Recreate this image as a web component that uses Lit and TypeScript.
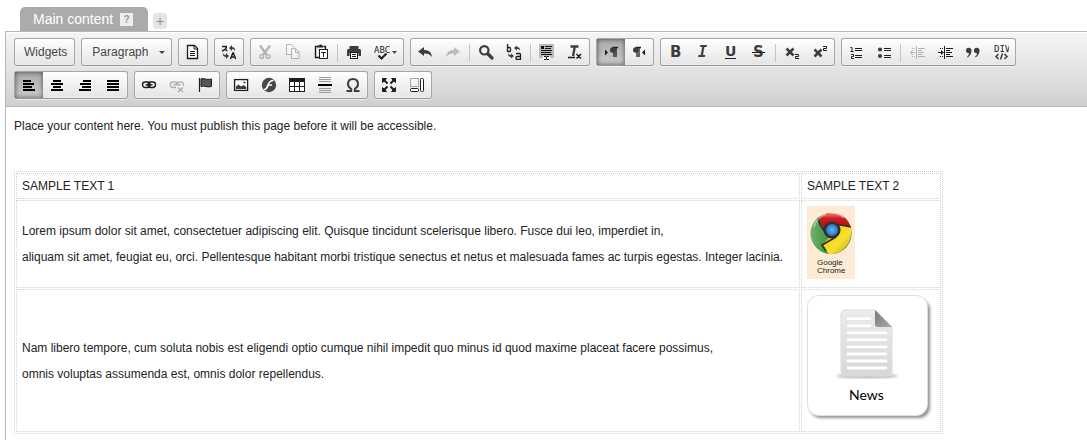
import { LitElement, html, svg, css, nothing, TemplateResult, SVGTemplateResult } from "lit";
import { customElement, property } from "lit/decorators.js";

const bars = (color: string, rects: number[][]) =>
  rects.map(([x, y, w, h]) => svg`<rect x=${x} y=${y} width=${w} height=${h} fill=${color} shape-rendering="crispEdges"/>`);

const K = "#1d1d1d";
const G = "#3d3d3d";

const ICONS: Record<string, SVGTemplateResult> = {
  page: svg`<path d="M2.5 1.5h7l3 3v10h-10z" fill="#fff" stroke=${K} stroke-width="1.3"/><path d="M9 1.5V5h3.5" fill="none" stroke=${K}/>${bars(K, [[5, 7, 5, 1], [5, 9, 5, 1], [5, 11, 5, 1]])}`,
  language: svg`<path d="M1 2.5h5M5.5 3C5 5 3 6.5 1 7M3.8 4.8L6.3 7" fill="none" stroke=${K} stroke-width="1.3"/>
    <path d="M8 4l3-3v2c2 0 3 1 3 4-1-1.5-2-2-3-2v2z" fill=${G}/>
    <path d="M8 12l-3 3v-2c-2 0-3-1-3.5-4 1 1.5 2 2 3.5 2V9z" fill=${G}/>
    <path d="M9.5 15l2.3-6h.6l2.3 6M10.5 13h3.3" fill="none" stroke=${K} stroke-width="1.4"/>`,
  cut: svg`<g fill="none" stroke=${K}><path d="M3 1.5l7 9.500M13 1.5L6 11" stroke-width="2.2"/><circle cx="4.8" cy="12.5" r="1.9" stroke-width="1.3"/><circle cx="11.2" cy="12.5" r="1.9" stroke-width="1.3"/></g>`,
  copy: svg`<g fill="#fff" stroke=${K}><path d="M1.5 0.5h5l3 3v7h-8z"/><path d="M6.5 4.5h4l3.500 3.500v6.500H6.5z"/><path d="M10.5 5v3.500H14" fill="none"/></g>`,
  paste: svg`<path d="M5 2.5H2.5v11H6" fill="none" stroke=${K} stroke-width="1.4"/><path d="M11 2.5h1.500V5" fill="none" stroke=${K} stroke-width="1.4"/><path d="M4.5 3.5v-2h2V.5h2v1h2v2z" fill=${K}/><rect x="6.5" y="5.5" width="8" height="9" fill="#fff" stroke=${K}/>${bars(K, [[8, 8, 5, 1], [10, 8, 1, 5]])}`,
  print: svg`<path d="M3.5 2h9v3h-9z" fill=${G}/><path d="M2 5h12l1 1v6h-2.500V9h-9v3H1V6z" fill=${G}/><rect x="4.500" y="8.500" width="7" height="6" fill="#fff" stroke=${K}/>${bars(K, [[6, 10, 4, 1], [6, 12, 4, 1]])}`,
  spell: svg`<text x="0" y="9" font-family="DejaVu Sans Mono, monospace" font-size="9" fill=${K}>ABC</text><path d="M4.500 11.500L7.500 14.500 12.500 9.500" fill="none" stroke=${K} stroke-width="2"/>`,
  undo: svg`<path d="M1 7.500L7 3v3c5 0 7.500 2.500 8 7-2-2.500-4-3.500-8-3.500V12z" fill=${G}/>`,
  redo: svg`<path d="M15 7.500L9 3v3c-5 0-7.500 2.500-8 7 2-2.500 4-3.500 8-3.500V12z" fill="#444"/>`,
  find: svg`<circle cx="6.300" cy="6.300" r="4.200" fill="#f4f4f4" stroke=${G} stroke-width="2.200"/><path d="M10 10l4 4" stroke=${G} stroke-width="3.200" stroke-linecap="round"/>`,
  replace: svg`<path d="M1.500 0v8M1.500 3.500h2q1 0 1 1v2q0 1-1 1h-2" fill="none" stroke=${K} stroke-width="1.300"/>
    <path d="M8 4l3-2.500V3c2 0 3 1 3 3.500C13 5.300 12 5 11 5v1.500z" fill=${G}/><path d="M8 12l-3 2.500V13c-2 0-3-1-3-3.500C3 10.700 4 11 5 11V9.500z" fill=${G}/>
    <path d="M10 9.500h3.500q1 0 1 1v5M14.500 12.500H11q-1 0-1 1v1q0 1 1 1h4" fill="none" stroke=${K} stroke-width="1.300"/>`,
  select: svg`${bars("#bbb", [[0, 0, 15, 14]])}${bars("#111", [[2, 2, 3, 3], [6, 2, 7, 1], [6, 4, 6, 1], [2, 6, 11, 1], [2, 8, 10, 1], [2, 10, 11, 1]])}${bars("#fff", [[4, 12, 7, 4]])}<path d="M5 12.500h2M8 12.500h2M5 15.500h2M8 15.500h2M7.500 12.500v3" stroke="#111"/>`,
  unformat: svg`<path d="M3.500 2.500h8M7.700 3l-1.600 9" stroke=${G} stroke-width="2.300"/><path d="M1 13.500h7M9.500 10l4.500 4.500M14 10l-4.500 4.500" stroke=${K} stroke-width="1.500"/>`,
  ltr: svg`<path d="M2 5.500v6l3-3z" fill=${K}/><path d="M11 3v10M13 3v10M9.500 3.500H15" stroke=${K} stroke-width="1.300"/><circle cx="9.800" cy="6" r="2.800" fill=${G}/>`,
  rtl: svg`<path d="M14 5.500v6l-3-3z" fill=${K}/><path d="M6 3v10M8 3v10M4.500 3.500H10" stroke=${K} stroke-width="1.300"/><circle cx="4.800" cy="6" r="2.800" fill=${G}/>`,
  bold: svg`<text x="3" y="13" font-family="DejaVu Sans, sans-serif" font-weight="700" font-size="15" fill=${G}>B</text>`,
  italic: svg`<text x="3" y="13" font-family="DejaVu Sans Mono, monospace" font-style="italic" font-weight="700" font-size="15" fill=${G}>I</text>`,
  underline: svg`<text x="2" y="12" font-family="DejaVu Sans, sans-serif" font-weight="700" font-size="14" fill=${G}>U</text>${bars(K, [[2, 14, 11, 1]])}`,
  strike: svg`<text x="2" y="13" font-family="DejaVu Sans, sans-serif" font-weight="700" font-size="15" fill=${G}>S</text>${bars(K, [[1, 8, 13, 1]])}`,
  sub: svg`<path d="M2.500 4.500l7 7M9.500 4.500l-7 7" stroke=${G} stroke-width="2.500"/><path d="M11 10.500h3.500v2h-3v2H15" fill="none" stroke=${K}/>`,
  sup: svg`<path d="M2.500 5.500l7 7M9.500 5.500l-7 7" stroke=${G} stroke-width="2.500"/><path d="M11 2.500h3.500v2h-3v2H15" fill="none" stroke=${K}/>`,
  numbers: svg`<path d="M2.500 3.500H4V7M2.500 7.500h3M3 10.500h2.500v2h-2v2H6" fill="none" stroke=${K}/>${bars(K, [[7, 4, 7, 1], [7, 6, 7, 1], [7, 11, 7, 1], [7, 13, 7, 1]])}`,
  bullets: svg`<circle cx="4" cy="5.500" r="2.100" fill=${G}/><circle cx="4" cy="12" r="2.100" fill=${G}/>${bars(K, [[8, 4, 7, 1], [8, 6, 7, 1], [8, 11, 7, 1], [8, 13, 7, 1]])}`,
  outdent: svg`${bars(K, [[7, 2, 1, 13], [9, 4, 7, 1], [9, 6, 4, 1], [9, 8, 6, 1], [9, 10, 4, 1], [9, 12, 7, 1], [3, 4, 1, 1], [5, 4, 1, 1], [3, 12, 1, 1], [5, 12, 1, 1]])}<path d="M6 8.500H2M4 6L1.500 8.500 4 11" fill="none" stroke=${K}/>`,
  indent: svg`${bars(K, [[7, 2, 1, 13], [9, 4, 7, 1], [9, 6, 4, 1], [9, 8, 6, 1], [9, 10, 4, 1], [9, 12, 7, 1], [3, 4, 1, 1], [5, 4, 1, 1], [3, 12, 1, 1], [5, 12, 1, 1]])}<path d="M1 8.500h4" stroke=${K}/><path d="M4 6l3 2.500L4 11z" fill=${K}/>`,
  quote: svg`<g fill=${G}><path d="M1 6.500a2.700 2.700 0 1 1 5.500 0c0 3-1.500 5.500-4 7L2 12.800c1.300-1 2-2 2-3.500C2.300 9.500 1 8.300 1 6.500z"/><path d="M9 6.500a2.700 2.700 0 1 1 5.500 0c0 3-1.500 5.500-4 7l-.5-.7c1.300-1 2-2 2-3.500-1.700.2-3-1-3-2.800z"/></g>`,
  div: svg`<text x="1" y="8" font-family="DejaVu Sans Mono, monospace" font-size="9" fill=${K}>DIV</text><path d="M5.500 10L3 12.500 5.500 15M11.500 10l2.500 2.500-2.500 2.500M9.500 9.500l-2 6" fill="none" stroke=${G} stroke-width="1.500"/>`,
  left: svg`${bars("#000", [[2, 3, 8, 2], [2, 6, 11, 2], [2, 9, 9, 2], [2, 12, 12, 2]])}`,
  center: svg`${bars("#000", [[4, 3, 8, 2], [2, 6, 12, 2], [4, 9, 8, 2], [2, 12, 12, 2]])}`,
  right: svg`${bars("#000", [[6, 3, 8, 2], [3, 6, 11, 2], [5, 9, 9, 2], [2, 12, 12, 2]])}`,
  justify: svg`${bars("#000", [[2, 3, 12, 2], [2, 6, 12, 2], [2, 9, 12, 2], [2, 12, 12, 2]])}`,
  link: svg`<g fill="none" stroke=${K} stroke-width="1.400"><rect x="1.500" y="5" width="7.500" height="5.500" rx="2.700"/><rect x="7" y="5" width="7.500" height="5.500" rx="2.700"/><path d="M4.500 7.800h7"/></g>`,
  unlink: svg`<g fill="none" stroke=${K} stroke-width="1.400"><path d="M7 10.500H4a2.700 2.700 0 0 1 0-5.500h2.500a2.700 2.700 0 0 1 2.500 2M7 7a2.700 2.700 0 0 1 2.500-2h2.500a2.700 2.700 0 0 1 2.200 4M4.500 7.800h7M9 10.500l5 4.500M14 10.500L9 15"/></g>`,
  flag: svg`<path d="M2.500 1v14" stroke=${K} stroke-width="1.200"/><path d="M4 2c3-1.500 5 1.500 10.500 0v7.500C10 11 8 8 4 9.500z" fill="#555" stroke=${K}/>`,
  image: svg`<rect x="1.600" y="2.600" width="13" height="10.800" fill="#fff" stroke=${K} stroke-width="1.300"/><path d="M3 12V9.500l2.500-2L8 9.500 10.500 8l2.800 2V12z" fill=${G}/><circle cx="11.500" cy="5.500" r="1.100" fill=${G}/>`,
  flash: svg`<circle cx="8" cy="8" r="7.200" fill="#484848"/><path d="M12.500 3.500C8.500 3.500 7.500 6 6.800 8.500 6.200 11 5.500 12.300 3 12.800M7.500 8h3.500" fill="none" stroke="#fff" stroke-width="1.600"/>`,
  table: svg`<rect x="0.500" y="1.500" width="15" height="13" fill="#fff" stroke=${K}/>${bars(K, [[0, 1, 16, 4], [5, 5, 1, 10], [10, 5, 1, 10], [0, 9, 16, 1]])}`,
  rule: svg`${bars("#999", [[2, 0, 12, 1], [2, 2, 12, 1], [2, 4, 12, 1], [2, 11, 12, 1], [2, 13, 12, 1], [2, 15, 12, 1]])}${bars("#000", [[1, 7, 14, 2]])}`,
  omega: svg`<path d="M1.500 14h4.700v-2C3.800 10.500 3 9 3 7c0-3 2-5 5-5s5 2 5 5c0 2-.8 3.500-3.200 5v2h4.700" fill="none" stroke=${G} stroke-width="2"/>`,
  maximize: svg`<g fill=${K} stroke=${K}><path d="M1.500 1.500h4l-4 4zM14.500 1.500h-4l4 4zM1.500 14.500h4l-4-4zM14.500 14.500h-4l4-4z"/><path d="M3 3l3.500 3.500M13 3L9.500 6.500M3 13l3.500-3.500M13 13L9.500 9.500" stroke-width="2"/></g>`,
  blocks: svg`<rect x="1.500" y="1.500" width="8" height="8" fill="none" stroke="#555" stroke-dasharray="1 1"/><rect x="1.500" y="11.500" width="8" height="3" rx="1" fill="#fff" stroke=${K}/><rect x="11.500" y="1.500" width="3" height="13" rx="1" fill="#fff" stroke=${K}/>`,
};

@customElement("tool-group")
class ToolGroup extends LitElement {
  static styles = css`
    :host {
      display: flex;
      box-sizing: border-box;
      height: 28px;
      border: 1px solid #a6a6a6;
      border-bottom-color: #979797;
      border-radius: 3px;
      background: linear-gradient(#fff, #e4e4e4);
      box-shadow: 0 1px 0 rgba(255, 255, 255, 0.5), inset 0 0 2px #fff;
    }
  `;
  render() {
    return html`<slot></slot>`;
  }
}

@customElement("tool-button")
class ToolButton extends LitElement {
  @property() icon = "";
  @property() label = "";
  @property({ type: Boolean }) on = false;
  @property({ type: Boolean }) off = false;
  @property({ type: Boolean }) menu = false;

  static styles = css`
    :host {
      display: flex;
    }
    .btn {
      display: flex;
      align-items: center;
      margin: 0;
      padding: 0 6px;
      border: 0;
      background: none;
      cursor: pointer;
    }
    .on {
      background: linear-gradient(#aaa, #cacaca);
      box-shadow: inset 0 0 5px rgba(0, 0, 0, 0.6);
    }
    .icon {
      display: block;
      width: 16px;
      height: 16px;
    }
    .btn:disabled .icon {
      opacity: 0.3;
    }
    .arrow {
      width: 5px;
      height: 3px;
      margin: 0 0 0 2px;
      fill: #474747;
    }
  `;
  render() {
    return html`<button
      class="btn ${this.on ? "on" : ""}"
      aria-label=${this.label}
      title=${this.label}
      ?disabled=${this.off}
    >
      <svg class="icon" viewBox="0 0 16 16" aria-hidden="true">${ICONS[this.icon]}</svg>
      ${this.menu ? html`<svg class="arrow" viewBox="0 0 5 3"><path d="M0 0h5L2.500 3z" /></svg>` : nothing}
    </button>`;
  }
}

type Tool = [icon: string, label: string, state?: "on" | "off" | "menu"] | "|";

const TOP: Tool[][] = [
  [["page", "Templates"]],
  [["language", "Translate"]],
  [["cut", "Cut", "off"], ["copy", "Copy", "off"], ["paste", "Paste as plain text"], "|", ["print", "Print"], ["spell", "Spell check", "menu"]],
  [["undo", "Undo"], ["redo", "Redo", "off"], "|", ["find", "Find"], ["replace", "Replace"], "|", ["select", "Select all"], ["unformat", "Remove format"]],
  [["ltr", "Left to right", "on"], ["rtl", "Right to left"]],
  [["bold", "Bold"], ["italic", "Italic"], ["underline", "Underline"], ["strike", "Strikethrough"], "|", ["sub", "Subscript"], ["sup", "Superscript"]],
  [["numbers", "Numbered list"], ["bullets", "Bulleted list"], "|", ["outdent", "Decrease indent", "off"], ["indent", "Increase indent"], ["quote", "Block quote"], ["div", "Div container"]],
];

const BOTTOM: Tool[][] = [
  [["left", "Align left", "on"], ["center", "Center"], ["right", "Align right"], ["justify", "Justify"]],
  [["link", "Link"], ["unlink", "Unlink", "off"], ["flag", "Anchor"]],
  [["image", "Image"], ["flash", "Flash"], ["table", "Table"], ["rule", "Horizontal line"], ["omega", "Special character"]],
  [["maximize", "Maximize"], ["blocks", "Show blocks"]],
];

@customElement("app-root")
class AppRoot extends LitElement {
  static styles = css`
    :host {
      display: block;
      padding: 7px 0 0 5px;
      background: #fff;
      color: #222;
      font: 12px/14px "Liberation Sans", Arial, sans-serif;
    }
    .tabs {
      display: flex;
      align-items: flex-end;
      gap: 5px;
      height: 24px;
      padding-left: 15px;
    }
    .tab {
      display: flex;
      align-items: center;
      gap: 7px;
      height: 24px;
      padding: 0 15px 0 13px;
      border-radius: 5px 5px 0 0;
      background: #ababab;
      color: #fff;
      font-size: 14px;
    }
    .help {
      width: 13px;
      height: 13px;
      padding: 0;
      border: 0;
      background: #eee;
      color: #999;
      font: bold 10px/13px "Liberation Sans", sans-serif;
    }
    .add {
      width: 14px;
      height: 16px;
      margin-bottom: 2px;
      padding: 0;
      border: 0;
      border-radius: 3px;
      background: #e5e5e5;
      color: #909090;
      font: 14px/16px "Liberation Sans", sans-serif;
    }
    .editor {
      border: 1px solid #b6b6b6;
      border-width: 1px 0 0 1px;
    }
    .toolbar {
      padding: 6px 8px 2px;
      border-bottom: 1px solid #b6b6b6;
      background: linear-gradient(#f5f5f5, #cfd1cf);
      box-shadow: inset 0 1px 0 #fff;
    }
    .row {
      display: flex;
      gap: 6px;
      margin-bottom: 5px;
    }
    .sep {
      width: 1px;
      height: 18px;
      margin: 5px 2px 0;
      background: #c4c4c4;
    }
    .text-btn {
      padding: 0 7px 0 9px;
      border: 0;
      background: none;
      color: #474747;
      font: inherit;
    }
    .combo {
      display: grid;
      align-items: center;
    }
    .format {
      grid-area: 1 / 1;
      box-sizing: border-box;
      width: 89px;
      height: 26px;
      padding: 0 10px;
      border: 0;
      appearance: none;
      background: none;
      color: #474747;
      font: inherit;
    }
    .caret {
      grid-area: 1 / 1;
      justify-self: end;
      width: 6px;
      height: 3px;
      margin-right: 6px;
      fill: #474747;
      pointer-events: none;
    }
    .page {
      padding: 12px 8px 6px;
    }
    .intro {
      margin: 0 0 38px;
    }
    .grid {
      border: 1px dotted #d3d3d3;
      border-spacing: 1px;
    }
    .cell {
      padding: 5px;
      border: 1px dotted #d3d3d3;
      text-align: left;
      font-weight: 400;
    }
    .lead {
      width: 772px;
    }
    .para {
      margin: 0;
      line-height: 26px;
    }
    .pic {
      display: block;
      margin-bottom: 3px;
    }
  `;

  private tools(groups: Tool[][]): TemplateResult[] {
    return groups.map(
      (group) => html`<tool-group>
        ${group.map((t) =>
          t === "|"
            ? html`<span class="sep"></span>`
            : html`<tool-button .icon=${t[0]} .label=${t[1]} .on=${t[2] === "on"} .off=${t[2] === "off"} .menu=${t[2] === "menu"}></tool-button>`
        )}
      </tool-group>`
    );
  }

  private chrome() {
    return html`<svg class="pic" width="48" height="73" viewBox="0 0 48 73" role="img" aria-label="Google Chrome">
      <defs>
        <radialGradient id="blue"><stop offset="0" stop-color="#67b5ee" /><stop offset="1" stop-color="#1767b5" /></radialGradient>
        <linearGradient id="red" x2="0" y2="1"><stop offset="0" stop-color="#e98a80" /><stop offset=".35" stop-color="#cf1c1c" /><stop offset="1" stop-color="#a80e12" /></linearGradient>
        <linearGradient id="green" x2="1" y2="0"><stop offset="0" stop-color="#73b06f" /><stop offset=".5" stop-color="#2f9638" /><stop offset="1" stop-color="#176a25" /></linearGradient>
        <linearGradient id="yellow" x2="1" y2="1"><stop offset="0" stop-color="#e8c70d" /><stop offset=".6" stop-color="#f7e12c" /><stop offset="1" stop-color="#cc9f15" /></linearGradient>
      </defs>
      <rect width="48" height="73" fill="#fdebd6" />
      <circle cx="24" cy="27.500" r="20.500" fill="url(#green)" />
      <path d="M11 12C21 3 38 6 43 19q1 2 1.300 4L25 17c-5 0-7 3-8 6z" fill="url(#red)" />
      <path d="M32 19l12 2c2.500 15-8 28-22 27l-7-9 9-9c8 0 10-5 8-11z" fill="url(#yellow)" />
      <path d="M11 12c1 5 3 9 6 13M31 18.500l13 2.500M29 31L15 39l4 6" fill="none" stroke="#382a20" stroke-width="1.700" />
      <circle cx="25" cy="24" r="7.300" fill="url(#blue)" stroke="#302c30" stroke-width="2.500" />
      <path d="M7 21c2-7 6-11 12-13M24 7q8 0 13 5" fill="none" stroke="#fff" stroke-opacity=".45" stroke-width="1.500" />
      <g font-family="Liberation Sans, sans-serif" font-size="8" fill="#222"><text x="10" y="59">Google</text><text x="10" y="67">Chrome</text></g>
    </svg>`;
  }

  private news() {
    return html`<svg class="pic" width="128" height="128" viewBox="0 0 128 128" role="img" aria-label="News">
      <defs>
        <filter id="soft" x="-10%" y="-10%" width="120%" height="120%"><feGaussianBlur stdDeviation="1.500" /></filter>
        <linearGradient id="paper" x2="0" y2="1"><stop offset="0" stop-color="#ececec" /><stop offset="1" stop-color="#d7d7d7" /></linearGradient>
        <linearGradient id="fold" x2="1" y2="1"><stop offset="0" stop-color="#777" /><stop offset="1" stop-color="#aaa" /></linearGradient>
      </defs>
      <rect x="3" y="4" width="120" height="119" rx="11" fill="#909090" filter="url(#soft)" />
      <rect x=".5" y=".5" width="120" height="120" rx="11" fill="#fff" stroke="#dedede" />
      <ellipse cx="60" cy="81" rx="31" ry="2" fill="#aaa" filter="url(#soft)" />
      <path d="M38 15h30l17 17v45q0 4-4 4H38q-4 0-4-4V19q0-4 4-4z" fill="url(#paper)" stroke="#ddd" />
      <path d="M68 15l17 17H71q-3 0-3-3z" fill="url(#fold)" />
      <path d="M41 24.500h22M41 31.500h22M41 38.500h38M41 45.500h38M41 52.500h38M41 59.500h38M41 66.500h38M41 73.500h38" stroke="#d0d0d0" stroke-width="3" stroke-linecap="round" />
      <path d="M41 24h22M41 31h22M41 38h38M41 45h38M41 52h38M41 59h38M41 66h38M41 73h38" stroke="#fff" stroke-width="3" stroke-linecap="round" />
      <text x="42" y="105" font-family="Lato, sans-serif" font-size="14" font-weight="400" fill="#000">News</text>
    </svg>`;
  }

  render() {
    return html`
      <div class="tabs">
        <div class="tab">Main content <button class="help" aria-label="Help">?</button></div>
        <button class="add" aria-label="Add">+</button>
      </div>
      <div class="editor">
        <div class="toolbar" role="toolbar">
          <div class="row">
            <tool-group><button class="text-btn">Widgets</button></tool-group>
            <tool-group>
              <div class="combo">
                <select class="format" aria-label="Paragraph format">
                  <option>Paragraph</option>
                </select>
                <svg class="caret" viewBox="0 0 6 3"><path d="M0 0h6L3 3z" /></svg>
              </div>
            </tool-group>
            ${this.tools(TOP)}
          </div>
          <div class="row">${this.tools(BOTTOM)}</div>
        </div>
        <div class="page">
          <p class="intro">Place your content here. You must publish this page before it will be accessible.</p>
          <table class="grid">
            <tr>
              <td class="cell"><div class="lead">SAMPLE TEXT 1</div></td>
              <td class="cell">SAMPLE TEXT 2</td>
            </tr>
            <tr>
              <td class="cell">
                <p class="para">
                  Lorem ipsum dolor sit amet, consectetuer adipiscing elit. Quisque tincidunt scelerisque libero. Fusce dui leo, imperdiet in,<br />
                  aliquam sit amet, feugiat eu, orci. Pellentesque habitant morbi tristique senectus et netus et malesuada fames ac turpis egestas. Integer lacinia.
                </p>
              </td>
              <td class="cell">${this.chrome()}</td>
            </tr>
            <tr>
              <td class="cell">
                <p class="para">
                  Nam libero tempore, cum soluta nobis est eligendi optio cumque nihil impedit quo minus id quod maxime placeat facere possimus,<br />
                  omnis voluptas assumenda est, omnis dolor repellendus.
                </p>
              </td>
              <td class="cell">${this.news()}</td>
            </tr>
          </table>
        </div>
      </div>
    `;
  }
}
